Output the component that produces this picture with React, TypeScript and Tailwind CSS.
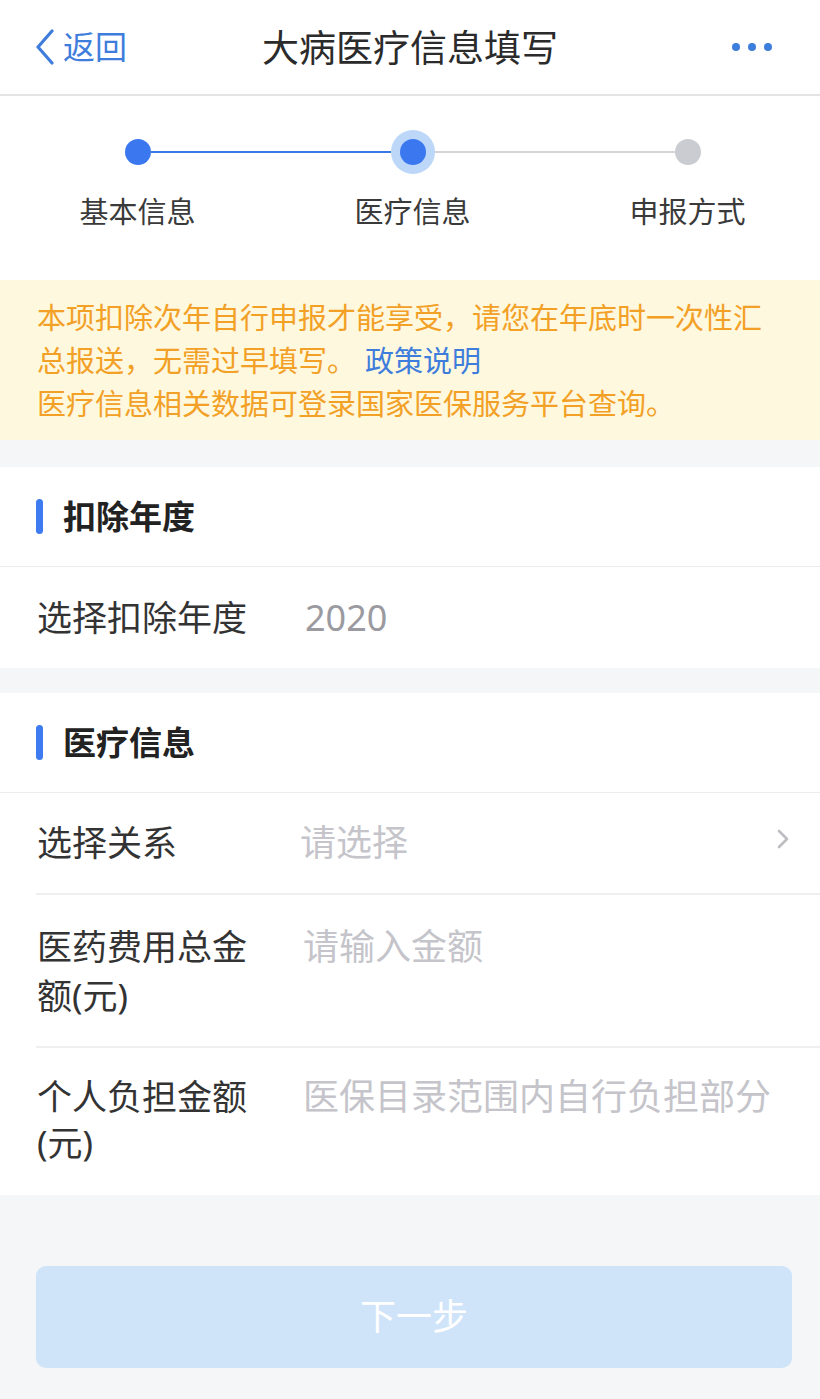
import React from 'react';

const steps = [
  { label: '基本信息', left: 'bg-transparent', right: 'bg-[#3b78e8]', state: 'done' },
  { label: '医疗信息', left: 'bg-[#3b78e8]', right: 'bg-[#d4d4d8]', state: 'active' },
  { label: '申报方式', left: 'bg-[#d4d4d8]', right: 'bg-transparent', state: 'todo' },
];

function SectionHeader({ title }: { title: string }) {
  return (
    <div className="h-[100px] flex items-center pl-[36px] border-b border-[#ececee]">
      <span className="w-[7px] h-[35px] rounded-full bg-[#3e7bf0]" />
      <span className="ml-[20px] text-[33px] font-bold text-[#222] leading-none">{title}</span>
    </div>
  );
}

export default function App() {
  return (
    <div
      className="min-h-[1399px] w-full overflow-hidden bg-[#f5f6f8]"
      style={{ fontFamily: '"Noto Sans", "Noto Sans CJK SC", sans-serif' }}
    >
      {/* Nav bar */}
      <div className="h-[96px] bg-white border-b-2 border-[#e4e4e6] grid grid-cols-[1fr_auto_1fr] items-center">
        <div className="flex items-center pl-[35px] text-[#3f7ddc]">
          <svg width="20" height="36" viewBox="0 0 20 36" fill="none">
            <path d="M17 2 L3 18 L17 34" stroke="currentColor" strokeWidth="3.2" strokeLinecap="round" strokeLinejoin="round" />
          </svg>
          <span className="ml-[8px] text-[32px] leading-none">返回</span>
        </div>
        <div className="text-[37px] text-[#2b2b2b] leading-none">大病医疗信息填写</div>
        <div className="flex justify-end items-center gap-[8px] pr-[48px]">
          <span className="w-[8px] h-[8px] rounded-full bg-[#3f7ddc]" />
          <span className="w-[8px] h-[8px] rounded-full bg-[#3f7ddc]" />
          <span className="w-[8px] h-[8px] rounded-full bg-[#3f7ddc]" />
        </div>
      </div>

      {/* Steps */}
      <div className="bg-white pt-[34px] pb-[48px] flex">
        {steps.map((s) => (
          <div key={s.label} className="w-[275px] shrink-0 flex flex-col items-center">
            <div className="w-full h-[44px] flex items-center">
              <div className={`flex-1 h-[2px] ${s.left}`} />
              {s.state === 'active' ? (
                <div className="w-[44px] h-[44px] rounded-full bg-[#bcd7f8] flex items-center justify-center">
                  <div className="w-[26px] h-[26px] rounded-full bg-[#3b78f0]" />
                </div>
              ) : (
                <div className={`w-[26px] h-[26px] rounded-full ${s.state === 'done' ? 'bg-[#3b78f0]' : 'bg-[#cbcbd2]'}`} />
              )}
              <div className={`flex-1 h-[2px] ${s.right}`} />
            </div>
            <div className="mt-[18px] text-[29px] leading-[40px] text-[#3a3a3a]">{s.label}</div>
          </div>
        ))}
      </div>

      {/* Notice */}
      <div className="bg-[#fef8de] pl-[37px] pr-[50px] pt-[16px] pb-[15px] text-[29px] leading-[43px] text-[#f2a026]">
        本项扣除次年自行申报才能享受，请您在年底时一次性汇总报送，无需过早填写。<span className="ml-[9px] text-[#3f7ddc]">政策说明</span>
        <br />
        医疗信息相关数据可登录国家医保服务平台查询。
      </div>

      {/* Deduction year */}
      <div className="mt-[27px] bg-white">
        <SectionHeader title="扣除年度" />
        <div className="h-[101px] flex items-center pl-[37px] leading-none">
          <span className="w-[230px] text-[35px] text-[#333]">选择扣除年度</span>
          <span className="pl-[38px] text-[36px] text-[#9a9aa0]">2020</span>
        </div>
      </div>

      {/* Medical info */}
      <div className="mt-[25px] bg-white">
        <SectionHeader title="医疗信息" />
        <div className="pl-[36px]">
          <div className="h-[102px] flex items-center pl-[1px] pr-[30px] border-b-2 border-[#efeff1] text-[35px] leading-[48px]">
            <span className="w-[230px] shrink-0 text-[#333]">选择关系</span>
            <span className="flex-1 pl-[33px] text-[36px] text-[#c4c4ca]">请选择</span>
            <svg width="14" height="22" viewBox="0 0 14 22" fill="none" className="mb-[8px]">
              <path d="M3 3 L11 11 L3 19" stroke="#bdbdc2" strokeWidth="2.6" strokeLinecap="round" strokeLinejoin="round" />
            </svg>
          </div>
          <div className="flex pl-[1px] pr-[30px] pt-[27px] pb-[26px] border-b-2 border-[#efeff1] text-[35px] leading-[49px]">
            <span className="w-[230px] shrink-0 text-[#333]">医药费用总金额(元)</span>
            <span className="flex-1 pl-[36px] text-[36px] text-[#c4c4ca]">请输入金额</span>
          </div>
          <div className="flex pl-[1px] pr-[10px] pt-[26px] pb-[29px] text-[35px] leading-[46px]">
            <span className="w-[230px] shrink-0 text-[#333]">个人负担金额(元)</span>
            <span className="flex-1 pl-[36px] text-[36px] text-[#c4c4ca] whitespace-nowrap">医保目录范围内自行负担部分</span>
          </div>
        </div>
      </div>

      {/* Next button */}
      <div className="mt-[71px] ml-[36px] mr-[28px] h-[102px] rounded-[10px] bg-[#cfe4f9] flex items-center justify-center">
        <span className="text-[36px] text-white leading-none">下一步</span>
      </div>
    </div>
  );
}
